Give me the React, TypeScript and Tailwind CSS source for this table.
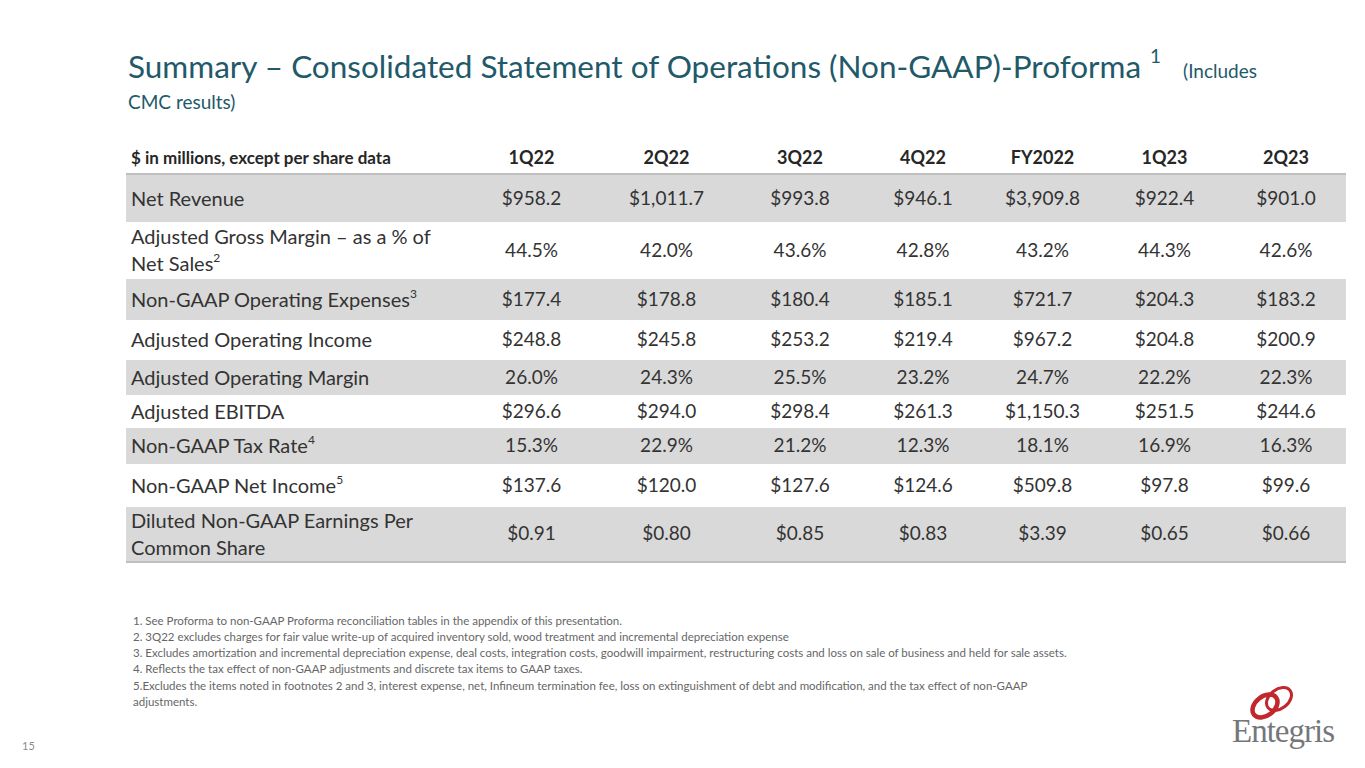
import React from "react";

type Row = {
  label: React.ReactNode;
  values: string[];
  shaded: boolean;
  h: string;
};

const cols = ["1Q22", "2Q22", "3Q22", "4Q22", "FY2022", "1Q23", "2Q23"];

const Sup = ({ n }: { n: string }) => (
  <sup className="text-[12px] relative -top-[9px]">{n}</sup>
);

const rows: Row[] = [
  { label: "Net Revenue", values: ["$958.2", "$1,011.7", "$993.8", "$946.1", "$3,909.8", "$922.4", "$901.0"], shaded: true, h: "h-[48px]" },
  {
    label: (
      <>
        Adjusted Gross Margin – as a % of
        <br />
        Net Sales<Sup n="2" />
      </>
    ),
    values: ["44.5%", "42.0%", "43.6%", "42.8%", "43.2%", "44.3%", "42.6%"],
    shaded: false,
    h: "h-[56px]",
  },
  { label: <>Non-GAAP Operating Expenses<Sup n="3" /></>, values: ["$177.4", "$178.8", "$180.4", "$185.1", "$721.7", "$204.3", "$183.2"], shaded: true, h: "h-[42px]" },
  { label: "Adjusted Operating Income", values: ["$248.8", "$245.8", "$253.2", "$219.4", "$967.2", "$204.8", "$200.9"], shaded: false, h: "h-[39px]" },
  { label: "Adjusted Operating Margin", values: ["26.0%", "24.3%", "25.5%", "23.2%", "24.7%", "22.2%", "22.3%"], shaded: true, h: "h-[36px]" },
  { label: "Adjusted EBITDA", values: ["$296.6", "$294.0", "$298.4", "$261.3", "$1,150.3", "$251.5", "$244.6"], shaded: false, h: "h-[32px]" },
  { label: <>Non-GAAP Tax Rate<Sup n="4" /></>, values: ["15.3%", "22.9%", "21.2%", "12.3%", "18.1%", "16.9%", "16.3%"], shaded: true, h: "h-[37px]" },
  { label: <>Non-GAAP Net Income<Sup n="5" /></>, values: ["$137.6", "$120.0", "$127.6", "$124.6", "$509.8", "$97.8", "$99.6"], shaded: false, h: "h-[42px]" },
  {
    label: (
      <>
        Diluted Non-GAAP Earnings Per
        <br />
        Common Share
      </>
    ),
    values: ["$0.91", "$0.80", "$0.85", "$0.83", "$3.39", "$0.65", "$0.66"],
    shaded: true,
    h: "h-[56px]",
  },
];

const grid = "grid grid-cols-[340px_131px_139px_128px_118px_121px_123px_120px] items-center";

const footnotes: React.ReactNode[] = [
  "1. See Proforma  to non-GAAP Proforma reconciliation tables in the appendix of this presentation.",
  "2. 3Q22 excludes charges for fair value write-up of acquired inventory sold, wood treatment and incremental depreciation expense",
  "3. Excludes amortization and incremental depreciation expense, deal costs, integration costs, goodwill impairment, restructuring costs and loss on sale of business and held for sale assets.",
  "4. Reflects the tax effect of non-GAAP adjustments and discrete tax items to GAAP taxes.",
  <>
    5.Excludes the items noted in footnotes 2 and 3, interest expense, net, Infineum termination fee, loss on extinguishment of debt and modification, and the tax effect of non-GAAP
    <br />
    adjustments.
  </>,
];

function Logo() {
  return (
    <div className="flex flex-col w-[112px]">
      <svg width="56" height="36" viewBox="0 0 56 36" className="ml-[14px]">
        <ellipse cx="19" cy="22" rx="14" ry="9.5" transform="rotate(-38 19 22)" fill="none" stroke="#c1272d" strokeWidth="4.5" />
        <ellipse cx="33" cy="15" rx="14" ry="9.5" transform="rotate(-38 33 15)" fill="none" stroke="#c1272d" strokeWidth="3" />
      </svg>
      <div className="-mt-[5px] text-[33px] leading-none tracking-[-1px] text-[#76777a] font-['Liberation_Serif',serif]">
        Entegris
      </div>
    </div>
  );
}

export default function App() {
  return (
    <div className="w-[1365px] h-[768px] bg-white relative overflow-hidden font-['Lato','Liberation_Sans',sans-serif] text-[#333333]">
      <div className="pl-[128px] pt-[47px] text-[#22596a]">
        <div className="flex items-baseline">
          <span className="text-[31.5px] leading-[38px]">
            Summary – Consolidated Statement of Operations (Non-GAAP)-Proforma
          </span>
          <span className="text-[19px] relative -top-[15px] ml-[9px]">1</span>
          <span className="text-[19px] ml-[22px]">(Includes</span>
        </div>
        <div className="text-[19px] leading-[24px] mt-[4px]">CMC results)</div>
      </div>

      <div className="ml-[126px] mt-[25px] w-[1220px]">
        <div className={`${grid} h-[36px] pt-[4px] font-bold text-[#262626] border-b-2 border-[#bfbfbf]`}>
          <div className="pl-[5px] text-[17px]">$ in millions, except per share data</div>
          {cols.map((c) => (
            <div key={c} className="text-center text-[18px]">
              {c}
            </div>
          ))}
        </div>
        {rows.map((r, i) => (
          <div
            key={i}
            className={`${grid} ${r.h} text-[19px] border-b border-white ${r.shaded ? "bg-[#d9d9d9]" : "bg-white"} ${
              i === rows.length - 1 ? "border-b-2 border-b-[#bfbfbf]" : ""
            }`}
          >
            <div className="pl-[5px] leading-[27px] text-[20px]">{r.label}</div>
            {r.values.map((v, j) => (
              <div key={j} className="text-center">
                {v}
              </div>
            ))}
          </div>
        ))}
      </div>

      <div className="ml-[133px] mt-[50px] text-[11.5px] leading-[16.3px] text-[#666666] whitespace-nowrap">
        {footnotes.map((f, i) => (
          <div key={i}>{f}</div>
        ))}
      </div>

      <div className="absolute left-[22px] top-[738px] text-[11px] text-[#8c8c8c]">15</div>
      <div className="absolute left-[1232px] top-[684px]">
        <Logo />
      </div>
    </div>
  );
}
